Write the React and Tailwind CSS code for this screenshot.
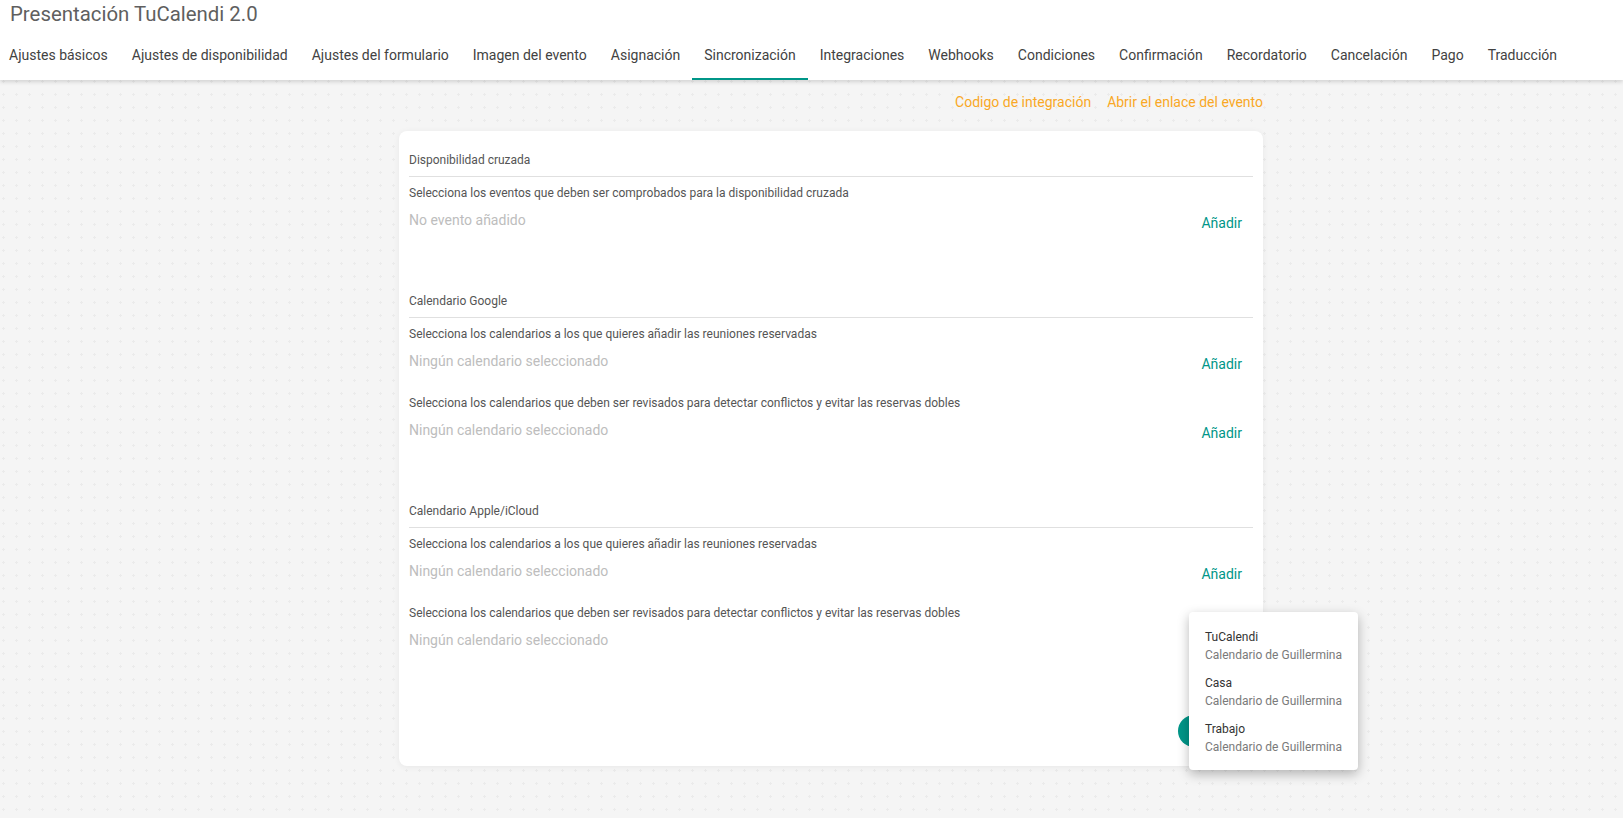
import React from 'react';

const tabs = [
  'Ajustes básicos',
  'Ajustes de disponibilidad',
  'Ajustes del formulario',
  'Imagen del evento',
  'Asignación',
  'Sincronización',
  'Integraciones',
  'Webhooks',
  'Condiciones',
  'Confirmación',
  'Recordatorio',
  'Cancelación',
  'Pago',
  'Traducción',
];

const sections = [
  {
    title: 'Disponibilidad cruzada',
    rows: [
      {
        label: 'Selecciona los eventos que deben ser comprobados para la disponibilidad cruzada',
        empty: 'No evento añadido',
      },
    ],
  },
  {
    title: 'Calendario Google',
    rows: [
      {
        label: 'Selecciona los calendarios a los que quieres añadir las reuniones reservadas',
        empty: 'Ningún calendario seleccionado',
      },
      {
        label: 'Selecciona los calendarios que deben ser revisados para detectar conflictos y evitar las reservas dobles',
        empty: 'Ningún calendario seleccionado',
      },
    ],
  },
  {
    title: 'Calendario Apple/iCloud',
    rows: [
      {
        label: 'Selecciona los calendarios a los que quieres añadir las reuniones reservadas',
        empty: 'Ningún calendario seleccionado',
      },
      {
        label: 'Selecciona los calendarios que deben ser revisados para detectar conflictos y evitar las reservas dobles',
        empty: 'Ningún calendario seleccionado',
      },
    ],
  },
];

const calendars = ['TuCalendi', 'Casa', 'Trabajo'];

const Row = ({ label, empty, first }) => (
  <div className={first ? 'mt-[7px]' : 'mt-[20px]'}>
    <p className="text-[12px] leading-[18px] text-[#555555]">{label}</p>
    <div className="mt-[8px] flex items-start justify-between">
      <span className="text-[14px] leading-[20px] text-[#bdbdbd]">{empty}</span>
      <button className="mt-[3px] mr-[11px] text-[14px] leading-[20px] text-[#009688]">Añadir</button>
    </div>
  </div>
);

const Section = ({ title, rows, first }) => (
  <div className={first ? '' : 'mt-[50px]'}>
    <div className="pt-[9px] pb-[7px] border-b border-[#e0e0e0]">
      <p className="text-[12px] leading-[18px] text-[#555555]">{title}</p>
    </div>
    {rows.map((r, i) => (
      <Row key={i} {...r} first={i === 0} />
    ))}
  </div>
);

export default function App() {
  return (
    <div className="min-h-screen font-['Roboto',sans-serif] bg-[#f5f5f5] bg-[radial-gradient(circle,#ebebeb_1px,transparent_1.3px)] bg-[length:13px_13px] bg-[position:-3px_-3px]">
      {/* Header */}
      <header className="bg-white shadow-[0_2px_4px_rgba(0,0,0,0.14)] relative z-10">
        <div className="h-[30px] pl-[10px]">
          <h1 className="text-[20.4px] leading-[29px] text-[#5f5f5f]">Presentación TuCalendi 2.0</h1>
        </div>
        <nav className="flex h-[50px] -ml-[3px]">
          {tabs.map((t) => (
            <div
              key={t}
              className={`px-3 pt-[15px] pb-[13px] border-b-2 text-[14px] leading-[20px] text-[#424242] whitespace-nowrap ${
                t === 'Sincronización' ? 'border-[#009688]' : 'border-transparent'
              }`}
            >
              {t}
            </div>
          ))}
        </nav>
      </header>

      {/* Content */}
      <div className="ml-[399px] w-[864px] pb-[50px]">
        <div className="flex justify-end gap-4 pt-[12px] text-[14px] leading-[20px] text-[#f9a825]">
          <a>Codigo de integración</a>
          <a>Abrir el enlace del evento</a>
        </div>

        <div className="relative mt-[19px] bg-white rounded-lg shadow-[0_1px_6px_rgba(0,0,0,0.06)] pt-[11px] px-[10px] pb-[19px]">
          {sections.map((s, i) => (
            <Section key={s.title} {...s} first={i === 0} />
          ))}

          <div className="mt-[62px] flex justify-end">
            <button className="h-8 w-[75px] rounded-full bg-[#009688] text-white text-[14px]">Guardar</button>
          </div>

          {/* Calendar dropdown */}
          <div className="absolute left-[790px] top-[481px] w-[169px] bg-white rounded-[4px] shadow-[0_4px_12px_rgba(0,0,0,0.28)] pt-[11px] pb-[9px] z-20">
            {calendars.map((c) => (
              <div key={c} className="pl-4 py-[5px] whitespace-nowrap">
                <p className="text-[12px] leading-[18px] text-[#333333]">{c}</p>
                <p className="text-[12px] leading-[18px] text-[#7a7a7a]">Calendario de Guillermina</p>
              </div>
            ))}
          </div>
        </div>
      </div>
    </div>
  );
}
